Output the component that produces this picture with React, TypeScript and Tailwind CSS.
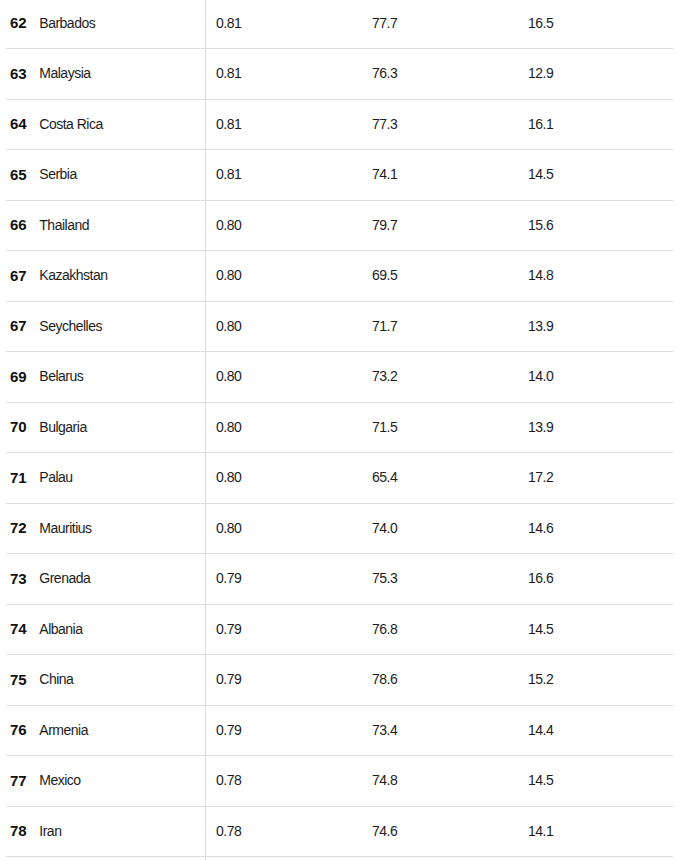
import React from "react";

const rows: [string, string, string, string, string][] = [
  ["62", "Barbados", "0.81", "77.7", "16.5"],
  ["63", "Malaysia", "0.81", "76.3", "12.9"],
  ["64", "Costa Rica", "0.81", "77.3", "16.1"],
  ["65", "Serbia", "0.81", "74.1", "14.5"],
  ["66", "Thailand", "0.80", "79.7", "15.6"],
  ["67", "Kazakhstan", "0.80", "69.5", "14.8"],
  ["67", "Seychelles", "0.80", "71.7", "13.9"],
  ["69", "Belarus", "0.80", "73.2", "14.0"],
  ["70", "Bulgaria", "0.80", "71.5", "13.9"],
  ["71", "Palau", "0.80", "65.4", "17.2"],
  ["72", "Mauritius", "0.80", "74.0", "14.6"],
  ["73", "Grenada", "0.79", "75.3", "16.6"],
  ["74", "Albania", "0.79", "76.8", "14.5"],
  ["75", "China", "0.79", "78.6", "15.2"],
  ["76", "Armenia", "0.79", "73.4", "14.4"],
  ["77", "Mexico", "0.78", "74.8", "14.5"],
  ["78", "Iran", "0.78", "74.6", "14.1"],
];

export default function App() {
  return (
    <div
      className="w-[677px] h-[860px] overflow-hidden bg-white text-[14px] tracking-[-0.5px] text-[#1c1c1c]"
      style={{ fontFamily: '"Liberation Sans", Arial, sans-serif' }}
    >
      <div className="ml-[6px] w-[667px] -mt-[1.5px] flex flex-col">
        {rows.map((r, i) => (
          <div
            key={i}
            className="grid grid-cols-[200px_156px_156px_155px] h-[50.5px] border-b border-[#dddddd]"
          >
            <div className="flex items-center pl-[4px] border-r border-[#dddddd]">
              <span className="font-bold text-[15px] tracking-[-0.2px] text-[#111]">{r[0]}</span>
              <span className="ml-[13px]">{r[1]}</span>
            </div>
            <div className="flex items-center pl-[10px]">{r[2]}</div>
            <div className="flex items-center pl-[10px]">{r[3]}</div>
            <div className="flex items-center pl-[10px]">{r[4]}</div>
          </div>
        ))}
        <div className="grid grid-cols-[200px_156px_156px_155px] h-[50.5px]">
          <div className="border-r border-[#dddddd]" />
          <div />
          <div />
          <div />
        </div>
      </div>
    </div>
  );
}
